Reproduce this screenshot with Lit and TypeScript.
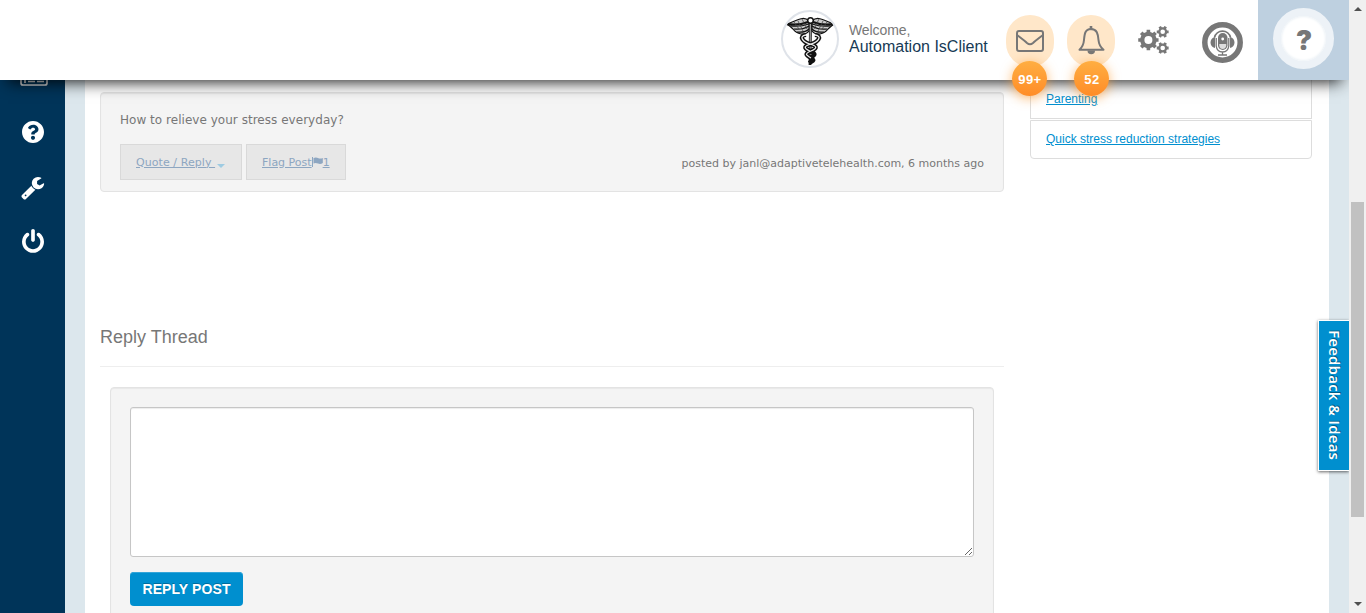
import { LitElement, html, css } from "lit";
import { customElement } from "lit/decorators.js";

/** Builds the outline of a toothed wheel, hole included (even-odd fill). */
function gear(cx: number, cy: number, outer: number, inner: number, hole: number, teeth: number, turn = 0): string {
  const pts: string[] = [];
  const step = (Math.PI * 2) / teeth;
  for (let i = 0; i < teeth; i++) {
    const a = i * step + turn;
    const list: [number, number][] = [
      [inner, -0.29],
      [outer, -0.22],
      [outer, 0.22],
      [inner, 0.29],
    ];
    for (const [r, k] of list) {
      pts.push(`${(cx + r * Math.cos(a + k * step)).toFixed(2)} ${(cy + r * Math.sin(a + k * step)).toFixed(2)}`);
    }
  }
  return `M${pts.join("L")}ZM${cx - hole} ${cy}a${hole} ${hole} 0 1 0 ${hole * 2} 0a${hole} ${hole} 0 1 0 ${-hole * 2} 0Z`;
}

const GEARS = [
  gear(10.4, 15, 10.3, 8.3, 4, 8, 0),
  gear(24.7, 6.8, 6.1, 4.6, 2.3, 6, 0),
  gear(24.7, 23, 6.1, 4.6, 2.3, 6, 0),
].join("");

@customElement("top-bar")
export class TopBar extends LitElement {
  static styles = css`
    :host {
      display: flex;
      justify-content: flex-end;
      height: 80px;
      background: #fff;
      box-shadow: 0 10px 15px -8px rgba(0, 0, 0, 0.9);
      font-family: "Liberation Sans", Arial, sans-serif;
    }
    svg { display: block; }
    .avatar {
      box-sizing: border-box;
      width: 58px;
      height: 58px;
      margin-top: 10px;
      border: 2px solid #dfe3e9;
      border-radius: 50%;
      overflow: hidden;
    }
    .user { width: 139px; margin: 22px 0 0 10px; white-space: nowrap; }
    .hello { font-size: 14px; line-height: 16px; color: #777; letter-spacing: -0.1px; }
    .name { font-size: 16px; line-height: 18px; color: #173a55; }
    .bubble {
      position: relative;
      width: 48px;
      height: 52px;
      margin: 15px 0 0 18px;
      border-radius: 24px;
      background: #ffe7c9;
      display: flex;
      justify-content: center;
    }
    .bubble + .bubble { margin-left: 13px; }
    .bubble svg { margin-top: 11px; }
    .count {
      position: absolute;
      left: 6px;
      top: 46px;
      width: 35px;
      height: 35px;
      border-radius: 50%;
      background: linear-gradient(#ffae42, #ff8c27);
      box-shadow: 0 2px 12px rgba(255, 150, 40, 0.65);
      color: #fff;
      font-size: 13px;
      font-weight: bold;
      line-height: 37px;
      letter-spacing: 0.4px;
      text-indent: 1px;
      text-align: center;
    }
    .second { left: 7px; }
    .gears { margin: 25px 0 0 23px; }
    .mic { margin: 22px 0 0 32px; }
    .help {
      width: 91px;
      height: 80px;
      margin-left: 15px;
      background: #bed0e0;
    }
    .ring {
      box-sizing: border-box;
      width: 61px;
      height: 61px;
      margin: 8px 0 0 15px;
      border: 8px solid #edf2f7;
      border-radius: 50%;
      background: #fff;
      box-shadow: inset 0 0 3px #dde7ef;
      color: #777;
      font: 900 27px/49px Inter, sans-serif;
      text-indent: 1px;
      text-align: center;
    }
  `;

  render() {
    return html`
      <div class="avatar">
        <svg width="54" height="54" viewBox="0 0 54 54" fill="none" stroke="#111">
          <g stroke-width="1.2">
            <path d="M26 9C20 3 14 9 4 12Q8 15 10 17Q13 21 18 22Q23 23 26 19Z" fill="#ccc" />
            <path d="M29 9C35 3 41 9 51 12Q47 15 45 17Q42 21 37 22Q32 23 29 19Z" fill="#ccc" />
            <path d="M4 12Q15 14 25 10M51 12Q40 14 30 10" stroke-width="2.4" />
            <path d="M8 14Q17 15 26 12M11 17Q20 18 26 14M14 20Q22 21 26 17M47 14Q38 15 29 12M44 17Q35 18 29 14M41 20Q33 21 29 17" />
            <path d="M11 10L16 17M15 9L20 19M19 7L24 17M44 10L39 17M40 9L35 19M36 7L31 17" stroke="#444" stroke-width=".8" />
          </g>
          <path d="M27.5 8L27 53" stroke-width="2.8" />
          <path d="M27.3 9L27 46" stroke="#fff" stroke-width=".8" />
          <g stroke-width="4.200">
            <path d="M23 23C15 24 20 30 27 32S35 36 28 39S23 43 28 46S29 49 26 51" />
            <path d="M32 23C40 24 35 30 28 32S20 36 27 39S32 43 27 46" />
          </g>
          <g stroke="#eee" stroke-width="1.3">
            <path d="M23 23C15 24 20 30 27 32S35 36 28 39S23 43 28 46" />
            <path d="M32 23C40 24 35 30 28 32S20 36 27 39" />
          </g>
          <circle cx="27.500" cy="8.500" r="2.800" fill="#fff" stroke-width="1.500" />
        </svg>
      </div>
      <div class="user">
        <div class="hello">Welcome,</div>
        <div class="name">Automation IsClient</div>
      </div>
      <div class="bubble">
        <svg width="30" height="30" viewBox="0 0 30 30" fill="none" stroke="#777" stroke-width="2">
          <rect x="2" y="5" width="26" height="20" rx="2" />
          <path d="M2 9C6 12 10 15 12 17Q15 19.500 18 17C20 15 24 12 28 9" />
        </svg>
        <span class="count">99+</span>
      </div>
      <div class="bubble">
        <svg width="30" height="30" viewBox="0 0 30 30" fill="none" stroke="#777" stroke-width="2">
          <path d="M15 3C9 3 8.500 8 8 14Q7.500 20 3.500 23.700H27.500Q23 20 22.500 14C22 8 21 3 15 3Z" stroke-linejoin="round" />
          <path d="M15 0.500V3" stroke-width="2.600" stroke-linecap="round" />
          <path d="M11.500 24.500H19A3.700 3.700 0 0 1 11.500 24.500Z" fill="#777" stroke="none" />
        </svg>
        <span class="count second">52</span>
      </div>
      <svg class="gears" width="32" height="30" viewBox="0 0 32 30">
        <path d=${GEARS} fill="#777" fill-rule="evenodd" />
      </svg>
      <svg class="mic" width="41" height="41" viewBox="0 0 41 41" fill="none" stroke="#777">
        <circle cx="20.500" cy="20.500" r="17.700" stroke-width="5.500" />
        <path d="M12.500 15.500A8.200 8.200 0 0 1 28.500 15.500" stroke-width="1.700" />
        <path d="M13 15C7 16 7 25 13 26ZM28 15C34 16 34 25 28 26Z" fill="#777" stroke="none" />
        <path d="M14.200 16V24Q15 30 20.500 30T26.800 24V16M20.500 30V33M16 33H25" stroke-width="1.300" />
        <rect x="16" y="11" width="9.500" height="17" rx="4.700" fill="#777" stroke="none" />
        <path d="M17.300 22H24.200V24Q23.500 27 20.700 27T17.300 24Z" fill="#ddd" stroke="none" />
        <circle cx="20.700" cy="17" r="1.400" fill="#fff" stroke="none" />
      </svg>
      <div class="help"><div class="ring">?</div></div>
    `;
  }
}

@customElement("side-nav")
export class SideNav extends LitElement {
  static styles = css`
    :host {
      display: flex;
      flex-direction: column;
      align-items: center;
      width: 65px;
      background: #003459;
      overflow: hidden;
    }
    svg { display: block; fill: #fff; flex: none; }
    .news { margin: -14px 0 0 2px; }
    .ask { margin-top: 35px; }
    .tool { margin-top: 33px; }
    .power { margin-top: 29px; }
  `;

  render() {
    return html`
      <svg class="news" width="28" height="20" viewBox="0 0 28 20">
        <path d="M1 5V17Q1 19 3 19H25Q27 19 27 17V2H5V17" fill="none" stroke="#ddd" stroke-width="1.700" />
        <path d="M8 15.500H15M17 15.500H24M8 12H15M17 12H24" fill="none" stroke="#ddd" stroke-width="1.700" />
      </svg>
      <svg class="ask" width="22" height="22" viewBox="8 8 496 496">
        <path d="M504 256c0 136.997-111.043 248-248 248S8 392.997 8 256C8 119.083 119.043 8 256 8s248 111.083 248 248zM262.655 90c-54.497 0-89.255 22.957-116.549 63.758-3.536 5.286-2.353 12.415 2.715 16.258l34.699 26.310c5.205 3.947 12.621 3.008 16.665-2.122 17.864-22.658 30.113-35.797 57.303-35.797 20.429 0 45.698 13.148 45.698 32.958 0 14.976-12.363 22.667-32.534 33.976C247.128 238.528 216 254.941 216 296v4c0 6.627 5.373 12 12 12h56c6.627 0 12-5.373 12-12v-1.333c0-28.462 83.186-29.647 83.186-106.667 0-58.002-60.165-102-116.531-102zM256 338c-25.365 0-46 20.635-46 46 0 25.364 20.635 46 46 46s46-20.636 46-46c0-25.365-20.635-46-46-46z" />
      </svg>
      <svg class="tool" width="24" height="24" viewBox="50 60 1740 1740">
        <path d="M448 1472q0-26-19-45t-45-19-45 19-19 45 19 45 45 19 45-19 19-45zm644-420l-682 682q-37 37-90 37-52 0-91-37l-106-108q-38-36-38-90 0-53 38-91l681-681q39 98 114.500 173.500t173.500 114.500zm634-435q0 39-23 106-47 134-164.500 217.500t-258.500 83.500q-185 0-316.500-131.500t-131.500-316.500 131.500-316.500 316.500-131.500q58 0 121.500 16.500t107.500 46.500q16 11 16 28t-16 28l-293 169v224l193 107q5-3 79-48.500t135.500-81 70.500-35.500q15 0 23.500 10t8.500 25z" />
      </svg>
      <svg class="power" width="22" height="24" viewBox="128 0 1536 1676">
        <path d="M1664 896q0 156-61 298t-164 245-245 164-298 61-298-61-245-164-164-245-61-298q0-182 80.500-343t226.500-270q43-32 95.500-25t83.500 50q32 42 24.500 94.500t-49.500 84.500q-98 74-151.500 181t-53.500 228q0 104 40.500 198.500t109.500 163.500 163.500 109.500 198.500 40.500 198.500-40.500 163.500-109.500 109.500-163.500 40.500-198.500q0-121-53.500-228t-151.500-181q-42-32-49.500-84.500t24.500-94.500q31-43 84-50t95 25q146 109 226.500 270t80.500 343zm-640-768v640q0 52-38 90t-90 38-90-38-38-90v-640q0-52 38-90t90-38 90 38 38 90z" />
      </svg>
    `;
  }
}

@customElement("forum-thread")
export class ForumThread extends LitElement {
  static styles = css`
    :host {
      display: block;
      width: 904px;
      font-family: Verdana, "DejaVu Sans", sans-serif;
      color: #777;
    }
    .well {
      box-sizing: border-box;
      border: 1px solid #e3e3e3;
      border-radius: 4px;
      background: #f4f4f4;
      box-shadow: inset 0 1px 1px rgba(0, 0, 0, 0.05);
      padding: 19px;
    }
    .post { height: 100px; margin-top: 12px; padding-top: 17px; }
    .text { font-size: 12px; line-height: 20px; letter-spacing: 0.03px; }
    .row { display: flex; align-items: flex-start; gap: 4px; margin-top: 14px; font-size: 11px; }
    .btn {
      box-sizing: border-box;
      display: flex;
      align-items: center;
      height: 36px;
      padding-left: 15px;
      border: 1px solid #d9d9d9;
      background: #e7e7e7;
      color: #8da6c1;
      white-space: pre;
    }
    .btn span { text-decoration: underline; }
    .quote { width: 122px; letter-spacing: 0.07px; }
    .flag { width: 100px; }
    .caret {
      border: 4px solid transparent;
      border-top-color: #9ecbe2;
      border-bottom: 0;
      margin: 7px 0 0 2px;
    }
    .by { margin-left: auto; line-height: 39px; white-space: nowrap; }
    .title {
      margin: 132px 0 0;
      padding-bottom: 17px;
      border-bottom: 1px solid #eee;
      font: 18px/24px "Liberation Sans", Arial, sans-serif;
    }
    .row { height: 37px; }
    .title { margin-top: 133px; }
    .form { margin: 20px 10px 0; height: 300px; }
    textarea {
      display: block;
      box-sizing: border-box;
      width: 844px;
      height: 150px;
      margin: 0;
      border: 1px solid #c6c6c6;
      border-radius: 3px;
      background: #fff;
      box-shadow: inset 0 1px 1px rgba(0, 0, 0, 0.075);
      resize: both;
    }
    .send {
      display: block;
      width: 113px;
      height: 34px;
      margin-top: 15px;
      padding: 0;
      border: 0;
      border-radius: 4px;
      background: #008fcf;
      box-shadow: inset 0 1px 0 #33a5d9;
      color: #fff;
      font: bold 14px/34px "Liberation Sans", Arial, sans-serif;
      letter-spacing: 0.1px;
      text-shadow: 0 -1px 0 rgba(0, 0, 0, 0.25);
      white-space: nowrap;
    }
  `;

  render() {
    return html`
      <div class="well post">
        <div class="text">How to relieve your stress everyday?</div>
        <div class="row">
          <a class="btn quote"><span>Quote / Reply </span><i class="caret"></i></a>
          <a class="btn flag"><span>Flag Post</span><svg width="11" height="10" viewBox="0 0 11 10" fill="#8da6c1"><path d="M0 0H1V10H0ZM1.500 1Q4 0 6 1T10.800 1V6Q8.500 7.500 6 6.500T1.500 6.500Z" /></svg><span>1</span></a>
          <span class="by">posted by janl@adaptivetelehealth.com, 6 months ago</span>
        </div>
      </div>
      <h3 class="title">Reply Thread</h3>
      <div class="well form">
        <textarea></textarea>
        <button class="send">REPLY POST</button>
      </div>
    `;
  }
}

@customElement("app-root")
export class AppRoot extends LitElement {
  static styles = css`
    :host {
      display: grid;
      grid-template-columns: 1349px 17px;
      height: 613px;
      overflow: hidden;
      background: #fff;
    }
    .page { display: flex; flex-direction: column; height: 613px; overflow: hidden; }
    top-bar { flex: none; z-index: 2; }
    .body { display: flex; flex: 1; min-height: 0; }
    .canvas { box-sizing: border-box; flex: 1; padding: 0 20px; background: #dce7ed; display: flex; }
    .paper { flex: 1; display: flex; gap: 26px; padding-left: 15px; background: #fff; overflow: hidden; }
    .topics {
      width: 282px;
      font: 12px/18px "Liberation Sans", Arial, sans-serif;
      color: #008fcf;
    }
    .topic { box-sizing: border-box; height: 39px; padding: 10px 15px; border: 1px solid #ddd; text-decoration: underline; }
    .topic + .topic { margin-top: 1px; height: 39px; padding-top: 9px; border-radius: 0 0 4px 4px; }
    .topic:first-child { border-top: 0; }
    .bar {
      display: flex;
      flex-direction: column;
      align-items: center;
      background: #f0f0f0;
    }
    .thumb { width: 13px; height: 315px; background: #c1c1c1; margin: 191px 1px 0 0; }
    .up, .down { border: 4px solid transparent; }
    .up { border-top: 0; border-bottom-color: #505050; margin-top: 7px; }
    .down { border-bottom: 0; border-top-color: #505050; margin: auto 0 7px; }
    .feedback {
      position: absolute;
      z-index: 3;
      left: 1318px;
      top: 320px;
      box-sizing: border-box;
      width: 31px;
      height: 151px;
      border: 1px solid #fff;
      border-right: 0;
      background: #008fcf;
      box-shadow: 0 1px 3px rgba(0, 0, 0, 0.6);
      clip-path: inset(-5px 0 -5px -5px);
      color: #fff;
      font: 600 15px/28px "Open Sans", sans-serif;
      letter-spacing: 0.25px;
      text-shadow: -1px -1px 0 rgba(0, 0, 0, 0.35);
      writing-mode: vertical-rl;
      text-align: center;
      white-space: nowrap;
    }
  `;

  render() {
    return html`
      <div class="page">
        <top-bar></top-bar>
        <div class="body">
          <side-nav></side-nav>
          <div class="canvas">
            <div class="paper">
              <forum-thread></forum-thread>
              <div class="topics">
                <div class="topic">Parenting</div>
                <div class="topic">Quick stress reduction strategies</div>
              </div>
            </div>
          </div>
        </div>
      </div>
      <div class="bar"><i class="up"></i><div class="thumb"></div><i class="down"></i></div>
      <div class="feedback">Feedback &amp; Ideas</div>
    `;
  }
}
